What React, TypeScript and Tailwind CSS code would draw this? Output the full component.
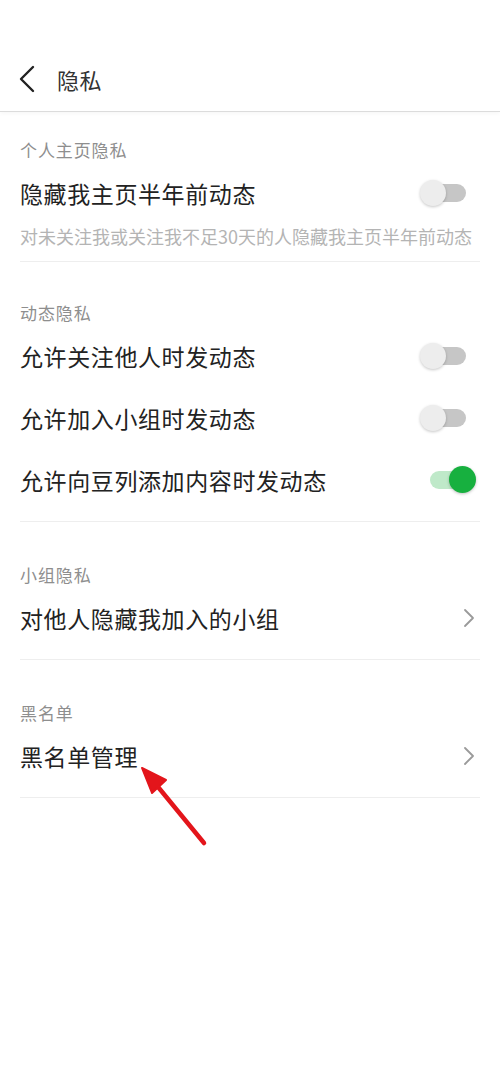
import React from "react";

const font = { fontFamily: '"Noto Sans CJK SC", "Noto Sans", sans-serif' };

const Toggle: React.FC<{ on?: boolean }> = ({ on }) => (
  <div className="relative w-[56px] h-[28px] mr-[4px]">
    <div
      className={
        "absolute left-[10px] top-[5px] w-[36px] h-[18px] rounded-full " +
        (on ? "bg-[#bfe9c9]" : "bg-[#c6c6c6]")
      }
    />
    {on ? (
      <div className="absolute left-[29px] top-[0px] w-[27px] h-[27px] rounded-full bg-[#17b03f] shadow-[0_1px_3px_rgba(0,0,0,0.25)]" />
    ) : (
      <div className="absolute left-[0px] top-[1px] w-[26px] h-[26px] rounded-full bg-[#ededed] shadow-[0_1px_3px_rgba(0,0,0,0.22)]" />
    )}
  </div>
);

const Chevron: React.FC = () => (
  <svg width="12" height="20" viewBox="0 0 12 20" className="mr-[5px]">
    <path d="M2 2 L10 10 L2 18" fill="none" stroke="#9a9a9a" strokeWidth="1.8" strokeLinecap="round" strokeLinejoin="round" />
  </svg>
);

const Row: React.FC<{ text: string; right: React.ReactNode }> = ({ text, right }) => (
  <div className="flex items-center justify-between h-[62px]">
    <span className="text-[23px] tracking-[0.6px] text-[#222] leading-none">{text}</span>
    {right}
  </div>
);

const Label: React.FC<{ text: string }> = ({ text }) => (
  <div className="h-[24px] flex items-center text-[17px] tracking-[0.9px] text-[#8e8e8e]">{text}</div>
);

const App: React.FC = () => {
  return (
    <div className="relative w-[500px] min-h-[1084px] bg-white" style={font}>
      <div className="h-[112px] pt-[56px] border-b border-[#dcdcdc] shadow-[0_2px_4px_rgba(0,0,0,0.03)]">
        <div className="flex items-center h-[46px] pl-[18px]">
          <svg width="18" height="28" viewBox="0 0 18 28">
            <path d="M15 2 L3 14 L15 26" fill="none" stroke="#222" strokeWidth="2.4" strokeLinecap="round" strokeLinejoin="round" />
          </svg>
          <span className="ml-[21px] text-[22px] tracking-[0.5px] text-[#333]">隐私</span>
        </div>
      </div>

      <div className="mx-[20px]">
        <div className="pt-[26px] pb-[13px] border-b border-[#eeeeee]">
          <Label text="个人主页隐私" />
          <Row text="隐藏我主页半年前动态" right={<Toggle />} />
          <div className="h-[24px] flex items-center text-[18px] text-[#b4b4b4] whitespace-nowrap">
            对未关注我或关注我不足30天的人隐藏我主页半年前动态
          </div>
        </div>

        <div className="pt-[39px] pb-[10px] border-b border-[#eeeeee]">
          <Label text="动态隐私" />
          <Row text="允许关注他人时发动态" right={<Toggle />} />
          <Row text="允许加入小组时发动态" right={<Toggle />} />
          <Row text="允许向豆列添加内容时发动态" right={<Toggle on />} />
        </div>

        <div className="pt-[41px] pb-[10px] border-b border-[#eeeeee]">
          <Label text="小组隐私" />
          <Row text="对他人隐藏我加入的小组" right={<Chevron />} />
        </div>

        <div className="pt-[41px] pb-[10px] border-b border-[#eeeeee]">
          <Label text="黑名单" />
          <Row text="黑名单管理" right={<Chevron />} />
        </div>
      </div>

      <svg className="absolute left-[136px] top-[762px]" width="76" height="88" viewBox="0 0 76 88">
        <path d="M68 81 L18 20" stroke="#e3151b" strokeWidth="4.5" strokeLinecap="round" />
        <path d="M6 6 L30 18 L16 31 Z" fill="#e3151b" stroke="#e3151b" strokeWidth="2" strokeLinejoin="round" />
      </svg>
    </div>
  );
};

export default App;
